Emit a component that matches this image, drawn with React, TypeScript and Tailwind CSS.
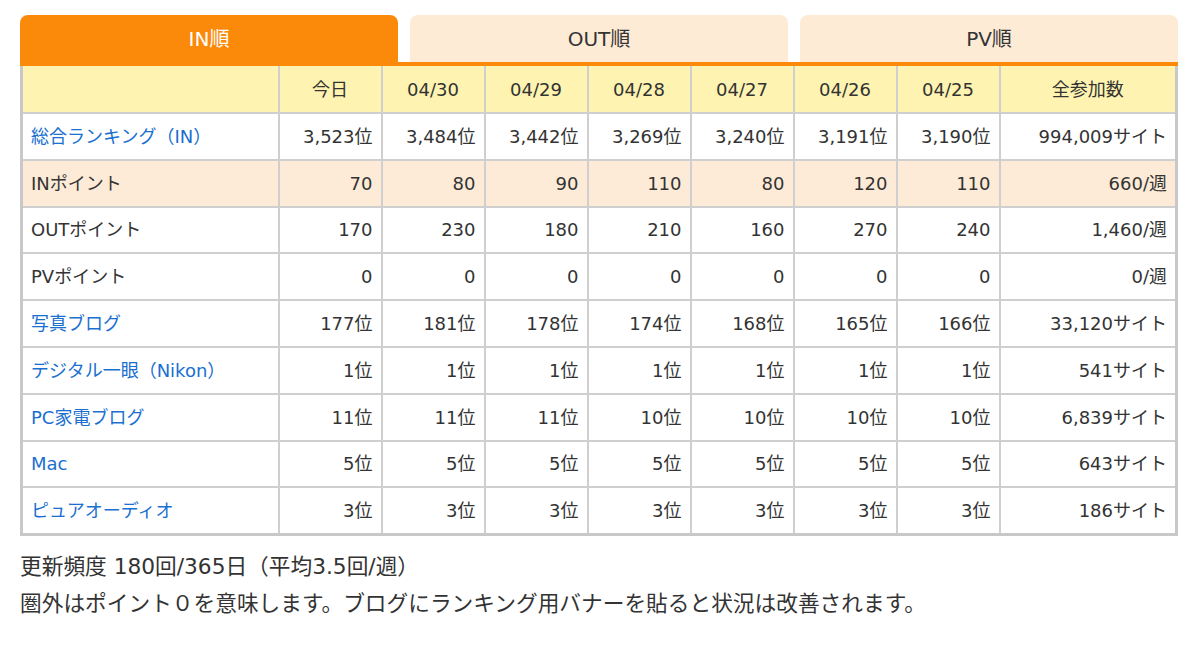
const dates = ["今日", "04/30", "04/29", "04/28", "04/27", "04/26", "04/25"];

type Row = {
  label: string;
  link?: boolean;
  highlight?: boolean;
  values: string[];
  total: string;
};

const rows: Row[] = [
  { label: "総合ランキング（IN）", link: true, values: ["3,523位", "3,484位", "3,442位", "3,269位", "3,240位", "3,191位", "3,190位"], total: "994,009サイト" },
  { label: "INポイント", highlight: true, values: ["70", "80", "90", "110", "80", "120", "110"], total: "660/週" },
  { label: "OUTポイント", values: ["170", "230", "180", "210", "160", "270", "240"], total: "1,460/週" },
  { label: "PVポイント", values: ["0", "0", "0", "0", "0", "0", "0"], total: "0/週" },
  { label: "写真ブログ", link: true, values: ["177位", "181位", "178位", "174位", "168位", "165位", "166位"], total: "33,120サイト" },
  { label: "デジタル一眼（Nikon）", link: true, values: ["1位", "1位", "1位", "1位", "1位", "1位", "1位"], total: "541サイト" },
  { label: "PC家電ブログ", link: true, values: ["11位", "11位", "11位", "10位", "10位", "10位", "10位"], total: "6,839サイト" },
  { label: "Mac", link: true, values: ["5位", "5位", "5位", "5位", "5位", "5位", "5位"], total: "643サイト" },
  { label: "ピュアオーディオ", link: true, values: ["3位", "3位", "3位", "3位", "3位", "3位", "3位"], total: "186サイト" },
];

const tabs = [
  { label: "IN順", active: true },
  { label: "OUT順", active: false },
  { label: "PV順", active: false },
];

export default function App() {
  return (
    <div
      className="bg-white w-[1200px] h-[665px] px-5 pt-[15px] text-[#333] text-[18px]"
      style={{ fontFamily: '"DejaVu Sans", "Noto Sans CJK JP", sans-serif' }}
    >
      {/* Tabs */}
      <div className="w-[1158px] flex gap-3 border-b-4 border-[#fb8a0a]">
        {tabs.map((t) => (
          <div
            key={t.label}
            className={`flex-1 h-[47px] flex items-center justify-center rounded-t-lg text-[20px] ${
              t.active ? "bg-[#fb8a0a] text-white" : "bg-[#fdebd6] text-[#333]"
            }`}
          >
            {t.label}
          </div>
        ))}
      </div>

      {/* Ranking table */}
      <table className="w-[1158px] border-collapse border-[3px] border-t-0 border-[#c8c8c8] table-fixed">
        <colgroup>
          <col className="w-[257px]" />
          {dates.map((d) => (
            <col key={d} className="w-[103px]" />
          ))}
          <col />
        </colgroup>
        <thead>
          <tr className="bg-[#fef3b0] h-[47px]">
            <th className="border-2 border-t-0 border-[#cfcfcf] font-normal"></th>
            {dates.map((d) => (
              <th key={d} className="border-2 border-t-0 border-[#cfcfcf] font-normal text-center">
                {d}
              </th>
            ))}
            <th className="border-2 border-t-0 border-[#cfcfcf] font-normal text-center">全参加数</th>
          </tr>
        </thead>
        <tbody>
          {rows.map((r) => (
            <tr key={r.label} className={`h-[46.8px] ${r.highlight ? "bg-[#fdebd7]" : "bg-white"}`}>
              <td className={`border-2 border-[#cfcfcf] pl-2 ${r.link ? "text-[#1a6fcf]" : ""}`}>{r.label}</td>
              {r.values.map((v, i) => (
                <td key={i} className="border-2 border-[#cfcfcf] text-right pr-2">
                  {v}
                </td>
              ))}
              <td className="border-2 border-[#cfcfcf] text-right pr-2">{r.total}</td>
            </tr>
          ))}
        </tbody>
      </table>

      {/* Notes */}
      <div className="mt-[12px] leading-[37px] text-[21.7px]">
        <p>更新頻度 180回/365日（平均3.5回/週）</p>
        <p>圏外はポイント０を意味します。ブログにランキング用バナーを貼ると状況は改善されます。</p>
      </div>
    </div>
  );
}
